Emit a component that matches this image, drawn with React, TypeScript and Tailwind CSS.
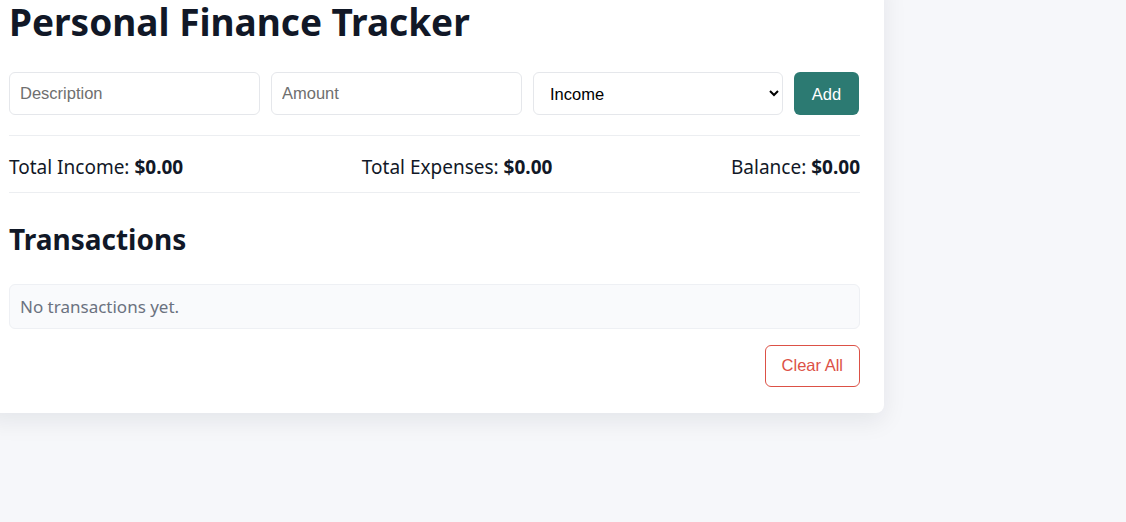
import React, { useState } from 'react';

type Tx = { id: number; description: string; amount: number; type: 'income' | 'expense' };

export default function App() {
  const [description, setDescription] = useState('');
  const [amount, setAmount] = useState('');
  const [type, setType] = useState<'income' | 'expense'>('income');
  const [items, setItems] = useState<Tx[]>([]);

  const income = items.filter(t => t.type === 'income').reduce((s, t) => s + t.amount, 0);
  const expenses = items.filter(t => t.type === 'expense').reduce((s, t) => s + t.amount, 0);
  const fmt = (n: number) => '$' + n.toFixed(2);

  const add = () => {
    const n = parseFloat(amount);
    if (!description || isNaN(n)) return;
    setItems([...items, { id: Date.now(), description, amount: n, type }]);
    setDescription('');
    setAmount('');
  };

  return (
    <div className="min-h-screen overflow-hidden bg-[#f6f7fa] font-['Noto_Sans',sans-serif] text-[#111827]">
      <div className="w-[899px] -ml-[15px] -mt-[24px] bg-white rounded-lg shadow-[0_8px_24px_rgba(15,23,42,0.08)] px-6 pt-6 pb-[26px]">
        <h1 className="text-[37px] font-bold leading-[1.2] mb-[28px]">Personal Finance Tracker</h1>

        <div className="flex gap-[11px]">
          <input
            value={description}
            onChange={e => setDescription(e.target.value)}
            placeholder="Description"
            className="w-[251px] h-[43px] px-[10px] border border-[#e5e7eb] rounded-md font-['Liberation_Sans',sans-serif] text-[16.5px] placeholder:text-[#6f6f6f] outline-none"
          />
          <input
            value={amount}
            onChange={e => setAmount(e.target.value)}
            placeholder="Amount"
            className="w-[251px] h-[43px] px-[10px] border border-[#e5e7eb] rounded-md font-['Liberation_Sans',sans-serif] text-[16.5px] placeholder:text-[#6f6f6f] outline-none"
          />
          <select
            value={type}
            onChange={e => setType(e.target.value as 'income' | 'expense')}
            className="w-[250px] h-[43px] px-[12px] border border-[#e5e7eb] rounded-md font-['Liberation_Sans',sans-serif] text-[16.5px] text-black bg-white outline-none"
          >
            <option value="income">Income</option>
            <option value="expense">Expense</option>
          </select>
          <button
            onClick={add}
            className="w-[65px] h-[43px] rounded-md bg-[#2c7a72] text-white font-['Liberation_Sans',sans-serif] text-[16.5px]"
          >
            Add
          </button>
        </div>

        <div className="mt-5 border-y border-[#eceef1] pt-[17px] pb-[11px] leading-[28px] flex justify-between text-[19px]">
          <div>Total Income: <strong>{fmt(income)}</strong></div>
          <div>Total Expenses: <strong>{fmt(expenses)}</strong></div>
          <div>Balance: <strong>{fmt(income - expenses)}</strong></div>
        </div>

        <h2 className="text-[28px] font-bold mt-[28px] mb-[26px] leading-[1.3]">Transactions</h2>

        {items.length === 0 ? (
          <div className="bg-[#f9fafc] border border-[#eef0f4] rounded-md px-[10px] py-[9px] leading-[25px] text-[#6b7280] text-[17px]">
            No transactions yet.
          </div>
        ) : (
          <ul className="flex flex-col gap-2">
            {items.map(t => (
              <li key={t.id} className="flex justify-between bg-[#f9fafc] border border-[#eef0f4] rounded-md px-[10px] py-[9px]">
                <span>{t.description}</span>
                <span className={t.type === 'income' ? 'text-[#2c7a72]' : 'text-[#d9534f]'}>{fmt(t.amount)}</span>
              </li>
            ))}
          </ul>
        )}

        <div className="flex justify-end mt-4">
          <button
            onClick={() => setItems([])}
            className="h-[42px] px-4 rounded-md border border-[#dc5146] text-[#dc5146] bg-white font-['Liberation_Sans',sans-serif] text-[16.5px]"
          >
            Clear All
          </button>
        </div>
      </div>
    </div>
  );
}
